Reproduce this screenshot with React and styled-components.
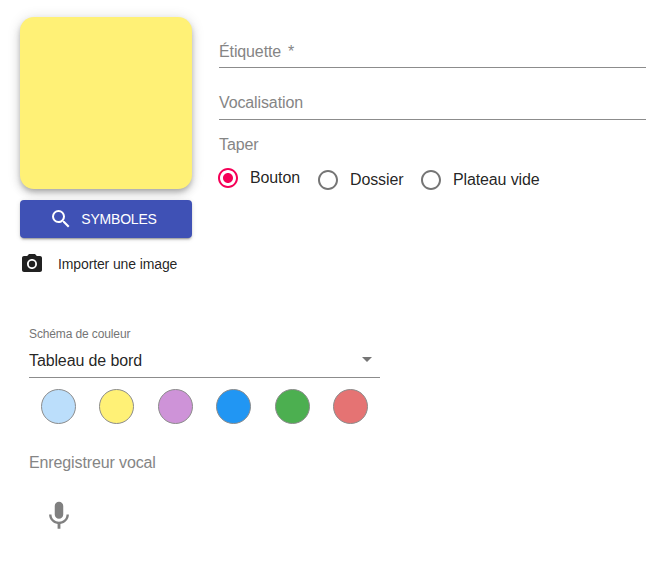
import styled, { createGlobalStyle } from "styled-components";
import { MdSearch, MdPhotoCamera, MdMic, MdArrowDropDown, MdRadioButtonChecked, MdRadioButtonUnchecked } from "react-icons/md";

const GlobalStyle = createGlobalStyle`
  html, body { margin: 0; background: #fff; }
  body { font-family: "Liberation Sans", Arial, sans-serif; letter-spacing: -0.12px; }
`;

const Page = styled.div`
  width: 646px;
  height: 561px;
  overflow: hidden;
  box-sizing: border-box;
  padding-top: 17px;
`;

const TopRow = styled.div`
  display: flex;
  padding-left: 20px;
`;

const TileColumn = styled.div`
  width: 172px;
  flex: none;
`;

const Tile = styled.div`
  height: 172px;
  border-radius: 14px;
  background: #fff176;
  box-shadow: 0 3px 5px -1px rgba(0,0,0,.2), 0 5px 8px 0 rgba(0,0,0,.14), 0 1px 14px 0 rgba(0,0,0,.12);
`;

const SymbolsButton = styled.button`
  display: flex;
  align-items: center;
  justify-content: center;
  gap: 8px;
  width: 100%;
  height: 38px;
  margin-top: 11px;
  padding: 0 6px 0 0;
  border: 0;
  border-radius: 4px;
  background: #3f51b5;
  color: #fff;
  font: 400 14px/1 "Liberation Sans", sans-serif;
  letter-spacing: -0.2px;
  box-shadow: 0 3px 1px -2px rgba(0,0,0,.2), 0 2px 2px 0 rgba(0,0,0,.14), 0 1px 5px 0 rgba(0,0,0,.12);
  svg { font-size: 24px; }
`;

const ImportRow = styled.div`
  display: flex;
  align-items: center;
  height: 24px;
  margin-top: 14px;
  font-size: 14px;
  color: rgba(0,0,0,.87);
  svg { font-size: 24px; color: #212121; margin-right: 14px; }
`;

const FormColumn = styled.div`
  flex: 1;
  margin-left: 27px;
`;

const TextField = styled.div`
  height: ${(p) => p.$height}px;
  box-sizing: border-box;
  padding-top: ${(p) => p.$top}px;
  border-bottom: 1px solid #8c8c8c;
  font-size: 16px;
  line-height: 19px;
  color: #858585;
  span { margin-left: 7px; }
`;

const GroupLabel = styled.div`
  margin-top: 15px;
  font-size: 16px;
  line-height: 19px;
  color: #858585;
`;

const RadioRow = styled.div`
  display: flex;
  margin-top: 12px;
  margin-left: -3px;
`;

const RadioOption = styled.label`
  display: flex;
  align-items: center;
  margin-right: ${(p) => (p.$checked ? 16 : 15.5)}px;
  font-size: 16px;
  color: rgba(0,0,0,.87);
  svg {
    font-size: 24px;
    margin-right: 10px;
    color: ${(p) => (p.$checked ? "#f50057" : "#757575")};
    transform: translateY(${(p) => (p.$checked ? 0 : 2)}px);
  }
  span { transform: translateY(${(p) => (p.$checked ? 0 : 2)}px); }
`;

const ColorSection = styled.div`
  width: 351px;
  margin: 51px 0 0 29px;
`;

const SelectLabel = styled.div`
  font-size: 12px;
  line-height: 14px;
  color: #757575;
`;

const SelectValue = styled.div`
  display: flex;
  align-items: center;
  justify-content: space-between;
  height: 37px;
  padding-top: 3px;
  box-sizing: border-box;
  border-bottom: 1px solid #8c8c8c;
  font-size: 16px;
  color: rgba(0,0,0,.87);
  svg { font-size: 24px; color: #757575; margin-top: -4px; margin-right: 1px; }
`;

const Swatches = styled.div`
  display: flex;
  justify-content: space-between;
  padding: 11px 12px 0;
`;

const Swatch = styled.div`
  width: 35px;
  height: 35px;
  box-sizing: border-box;
  border-radius: 50%;
  border: 1px solid #8c8c8c;
  background: ${(p) => p.$color};
`;

const RecorderLabel = styled.div`
  margin: 29px 0 0 29px;
  font-size: 16px;
  line-height: 19px;
  color: #858585;
`;

const MicButton = styled.div`
  display: flex;
  margin: 27px 0 0 42px;
  svg { font-size: 34px; color: #808080; }
`;

const swatches = ["#bbdefb", "#fff176", "#ce93d8", "#2196f3", "#4caf50", "#e57373"];

export default function App() {
  return (
    <Page>
      <GlobalStyle />
      <TopRow>
        <TileColumn>
          <Tile />
          <SymbolsButton>
            <MdSearch />
            SYMBOLES
          </SymbolsButton>
          <ImportRow>
            <MdPhotoCamera />
            Importer une image
          </ImportRow>
        </TileColumn>
        <FormColumn>
          <TextField $height={51} $top={25}>
            Étiquette<span>*</span>
          </TextField>
          <TextField $height={52} $top={25}>
            Vocalisation
          </TextField>
          <GroupLabel>Taper</GroupLabel>
          <RadioRow>
            <RadioOption $checked>
              <MdRadioButtonChecked />
              <span>Bouton</span>
            </RadioOption>
            <RadioOption>
              <MdRadioButtonUnchecked />
              <span>Dossier</span>
            </RadioOption>
            <RadioOption>
              <MdRadioButtonUnchecked />
              <span>Plateau vide</span>
            </RadioOption>
          </RadioRow>
        </FormColumn>
      </TopRow>
      <ColorSection>
        <SelectLabel>Schéma de couleur</SelectLabel>
        <SelectValue>
          Tableau de bord
          <MdArrowDropDown />
        </SelectValue>
        <Swatches>
          {swatches.map((color) => (
            <Swatch key={color} $color={color} />
          ))}
        </Swatches>
      </ColorSection>
      <RecorderLabel>Enregistreur vocal</RecorderLabel>
      <MicButton>
        <MdMic />
      </MicButton>
    </Page>
  );
}
